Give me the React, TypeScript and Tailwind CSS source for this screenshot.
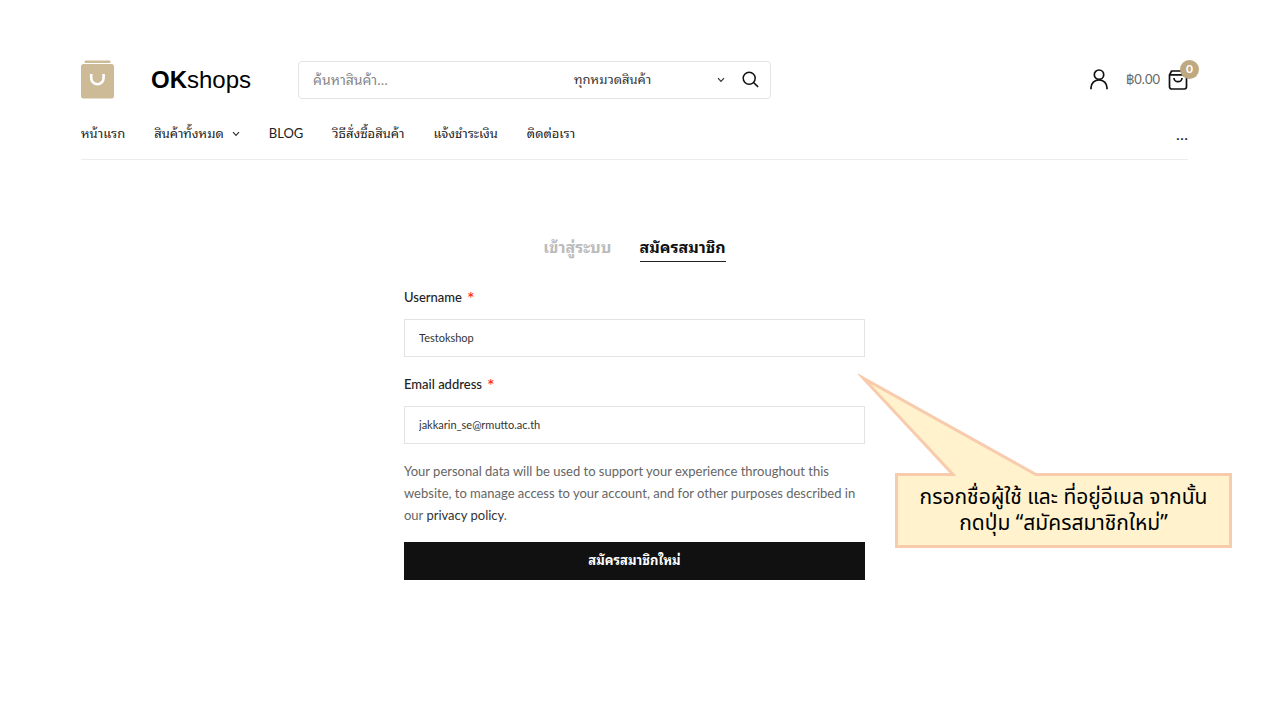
import React from "react";

const navItems = [
  { label: "หน้าแรก" },
  { label: "สินค้าทั้งหมด", menu: true },
  { label: "BLOG" },
  { label: "วิธีสั่งซื้อสินค้า" },
  { label: "แจ้งชำระเงิน" },
  { label: "ติดต่อเรา" },
];

function Chevron() {
  return (
    <svg viewBox="0 0 8 6" className="h-[6px] w-[8px] shrink-0" fill="none" stroke="#333" strokeWidth="1.2" aria-hidden="true">
      <path d="M1 1.2 4 4.4 7 1.2" />
    </svg>
  );
}

function Logo() {
  return (
    <a href="#" className="flex items-center gap-9 text-black">
      <svg viewBox="0 0 34 39" className="h-[39px] w-[34px]" aria-hidden="true">
        <rect x="3.500" y="0.5" width="26" height="2.6" rx="1.2" fill="#cdbb97" />
        <rect x="0" y="4" width="33" height="34.5" rx="2.5" fill="#cdbb97" />
        <path d="M10.2 14v4a6.200 6.200 0 0 0 12.4 0v-4" fill="none" stroke="#fff" strokeWidth="2.6" />
      </svg>
      <span className="font-['Liberation_Sans',sans-serif] text-2xl leading-9">
        <b>OK</b>shops
      </span>
    </a>
  );
}

function SearchBar() {
  return (
    <form className="flex h-[38px] w-[473px] items-center rounded border border-[#e3e3e3] pr-[11px] pl-[14px]">
      <input
        type="search"
        aria-label="ค้นหาสินค้า"
        placeholder="ค้นหาสินค้า…"
        className="min-w-0 flex-1 text-sm outline-none placeholder:text-[#868686]"
      />
      <div className="relative flex w-[151px] items-center">
        <select aria-label="หมวดสินค้า" className="w-full appearance-none bg-transparent text-[13px] text-[#333] outline-none">
          <option>ทุกหมวดสินค้า</option>
        </select>
        <span className="pointer-events-none absolute right-0">
          <Chevron />
        </span>
      </div>
      <button type="button" aria-label="ค้นหา" className="ml-[17px]">
        <svg viewBox="0 0 17 17" className="h-[17px] w-[17px]" fill="none" stroke="#111" strokeWidth="1.5" aria-hidden="true">
          <circle cx="7.2" cy="7.2" r="6" />
          <path d="m11.5 11.5 4.6 4.4" />
        </svg>
      </button>
    </form>
  );
}

function Account() {
  return (
    <div className="ml-auto flex items-center">
      <a href="#" aria-label="บัญชีของฉัน">
        <svg viewBox="0 0 18 21" className="h-[21px] w-[18px]" fill="none" stroke="#111" strokeWidth="1.7" aria-hidden="true">
          <circle cx="9" cy="5.7" r="4.7" />
          <path d="M1 20.2v-1.4a8 8 0 0 1 16 0v1.4" />
        </svg>
      </a>
      <span className="ml-[18px] text-[13px] text-[#666]">฿0.00</span>
      <a href="#" aria-label="ตะกร้าสินค้า" className="relative ml-2">
        <svg viewBox="0 0 20 20" className="h-5 w-5" fill="none" stroke="#111" strokeWidth="1.7" strokeLinejoin="round" aria-hidden="true">
          <path d="M1.500 4.800 3.6 1h12.8L18.500 4.800v12a2.2 2.2 0 0 1-2.2 2.2H3.7A2.2 2.2 0 0 1 1.500 16.800Z" />
          <path d="M1.500 4.800h17M6 8a4 3.700 0 0 0 8 0" />
        </svg>
        <span className="absolute -top-[10px] -right-[11px] flex size-[19px] items-center justify-center rounded-full bg-[#bfa980] text-xs font-bold text-white">
          0
        </span>
      </a>
    </div>
  );
}

function Field({ id, label, type, value }: { id: string; label: string; type: string; value: string }) {
  return (
    <div className="mb-4">
      <label htmlFor={id} className="flex h-6 items-center gap-[5px] text-[13px] font-medium text-[#222]">
        {label} <span className="text-lg leading-6 text-[#ff2020]">*</span>
      </label>
      <input
        id={id}
        type={type}
        defaultValue={value}
        className="mt-[9px] block h-[38px] w-full border border-[#e3e3e3] px-[14px] pb-[2px] text-[11px] text-[#333] outline-none"
      />
    </div>
  );
}

function Callout() {
  return (
    <aside className="absolute top-[473px] left-[895px] w-[337px] font-['Noto_Sans_Thai','Noto_Sans',sans-serif]">
      <div className="flex h-[75px] flex-col items-center justify-center border-3 border-[#f8cbad] bg-[#fff2cc] text-[21px] leading-[26px] whitespace-nowrap text-black">
        <p>กรอกชื่อผู้ใช้ และ ที่อยู่อีเมล จากนั้น</p>
        <p>กดปุ่ม “สมัครสมาชิกใหม่”</p>
      </div>
      <svg viewBox="0 0 184 106" className="absolute -top-[100px] -left-[37px] h-[106px] w-[184px]" aria-hidden="true">
        <path d="M95 103 5 5 178 103Z" fill="#fff2cc" />
        <path d="M90 101.5H95L5 5 178 101.5H183" fill="none" stroke="#f8cbad" strokeWidth="3" strokeMiterlimit="10" />
      </svg>
    </aside>
  );
}

export default function App() {
  return (
    <div className="relative min-h-screen bg-white font-['Lato','Noto_Sans_Thai_Looped','Loma','Waree','Garuda','Noto_Sans_Thai','Noto_Sans',sans-serif] text-[#222]">
      <div className="pt-[60px] pr-[92px] pl-[81px]">
        <header className="border-b border-[#ececec]">
          <div className="flex items-center">
            <Logo />
            <div className="ml-[47px]">
              <SearchBar />
            </div>
            <Account />
          </div>
          <nav className="flex h-[60px] items-center gap-[29px] pt-[10px] text-[13px] whitespace-nowrap">
            {navItems.map((item) => (
              <a key={item.label} href="#" className="flex items-center gap-2">
                {item.label}
                {item.menu && <Chevron />}
              </a>
            ))}
            <button type="button" aria-label="เมนูเพิ่มเติม" className="ml-auto text-base">
              …
            </button>
          </nav>
        </header>

        <main className="mx-auto max-w-[461px] pt-[75px]">
          <div className="flex justify-center gap-7 text-base font-bold">
            <button type="button" className="h-[27px] pb-1 text-[#bbb]">
              เข้าสู่ระบบ
            </button>
            <button type="button" className="h-[27px] border-b border-[#222] pb-1 text-[#111]">
              สมัครสมาชิก
            </button>
          </div>
          <form className="pt-6">
            <Field id="username" label="Username" type="text" value="Testokshop" />
            <Field id="email" label="Email address" type="email" value="jakkarin_se@rmutto.ac.th" />
            <p className="text-[13px] leading-[22px] text-[#666]">
              Your personal data will be used to support your experience throughout this website, to manage access to your
              account, and for other purposes described in our{" "}
              <a href="#" className="text-[#333]">
                privacy policy
              </a>
              .
            </p>
            <button type="button" className="mt-4 h-[38px] w-full bg-[#111] text-[13px] font-bold text-white">
              สมัครสมาชิกใหม่
            </button>
          </form>
        </main>
      </div>
      <Callout />
    </div>
  );
}
